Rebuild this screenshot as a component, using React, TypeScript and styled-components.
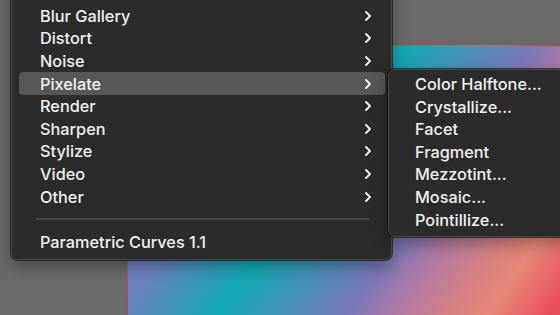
import styled, { createGlobalStyle } from 'styled-components';

const GlobalStyle = createGlobalStyle`
    html, body {
        margin: 0;
        padding: 0;
        background: #6a6a6a;
    }
    body {
        font-family: Inter, "Noto Sans", "Liberation Sans", sans-serif;
        -webkit-font-smoothing: antialiased;
    }
`;

const Workspace = styled.div`
    position: relative;
    width: 560px;
    height: 315px;
    overflow: hidden;
    background: #6a6a6a;
    display: flex;
    padding: 45px 0 0 127px;
    box-sizing: border-box;
`;

const Canvas = styled.div`
    flex: 1;
    border-left: 1px solid rgba(0, 0, 0, 0.18);
    border-top: 1px solid rgba(0, 0, 0, 0.18);
    background: linear-gradient(
        124.5deg,
        #7c78c0 0px,
        #7080c0 141px,
        #10aab4 226px,
        #4a90b8 284px,
        #7a78b8 333px,
        #a878a8 366px,
        #d08088 408px,
        #e88878 449px,
        #e85058 498px
    );
`;

const Menu = styled.div<{ $left: number; $top: number; $width: number }>`
    position: absolute;
    left: ${(p) => p.$left}px;
    top: ${(p) => p.$top}px;
    width: ${(p) => p.$width}px;
    box-sizing: border-box;
    background: #2b2b2b;
    border: 1px solid #4a4a4a;
    border-radius: 7px;
    box-shadow: 0 0 0 1px rgba(0, 0, 0, 0.55), 0 6px 18px rgba(0, 0, 0, 0.35);
    display: flex;
    flex-direction: column;
`;

const MainMenu = styled(Menu)`
    padding: 4px 0 6px;
`;

const SubMenu = styled(Menu)`
    padding: 2.7px 0 5px;
`;

const Row = styled.div<{ $active?: boolean; $indent: number }>`
    height: 22.6px;
    margin: 0 6px 0 7px;
    padding: 0 13px 0 ${(p) => p.$indent}px;
    border-radius: 4px;
    display: flex;
    align-items: center;
    justify-content: space-between;
    background: ${(p) => (p.$active ? '#575757' : 'transparent')};
    color: #f0f0f0;
    font-size: 16.3px;
    font-weight: 500;
    white-space: nowrap;
`;

const Separator = styled.div`
    height: 2px;
    margin: 10.3px 22px 10.3px 24px;
    background: #454545;
`;

const Chevron = () => (
    <svg width="8" height="12" viewBox="0 0 8 12" fill="none">
        <polyline points="2,2 6,6 2,10" stroke="#f2f2f2" strokeWidth="1.9" strokeLinecap="round" strokeLinejoin="round" />
    </svg>
);

const filterGroups = ['Blur', 'Blur Gallery', 'Distort', 'Noise', 'Pixelate', 'Render', 'Sharpen', 'Stylize', 'Video', 'Other'];

const pixelateItems = ['Color Halftone...', 'Crystallize...', 'Facet', 'Fragment', 'Mezzotint...', 'Mosaic...', 'Pointillize...'];

const App = () => {
    return (
        <>
            <GlobalStyle />
            <Workspace>
                <Canvas />
                <MainMenu $left={11} $top={-23} $width={381}>
                    {filterGroups.map((name) => (
                        <Row key={name} $indent={21} $active={name === 'Pixelate'}>
                            <span>{name}</span>
                            <Chevron />
                        </Row>
                    ))}
                    <Separator />
                    <Row $indent={21}>
                        <span>Parametric Curves 1.1</span>
                    </Row>
                </MainMenu>
                <SubMenu $left={388} $top={69} $width={200}>
                    {pixelateItems.map((name) => (
                        <Row key={name} $indent={19}>
                            <span>{name}</span>
                        </Row>
                    ))}
                </SubMenu>
            </Workspace>
        </>
    );
};

export default App;
